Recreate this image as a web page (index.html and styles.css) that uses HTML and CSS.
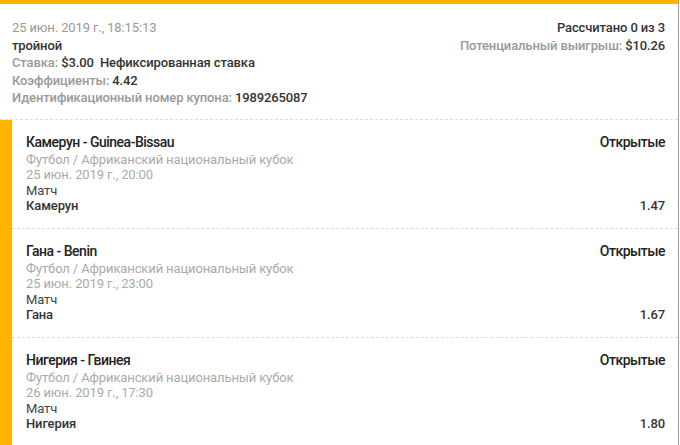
FILE: index.html
```html
<!DOCTYPE html>
<html lang="ru">
<head>
    <meta charset="UTF-8">
    <meta name="viewport" content="width=device-width, initial-scale=1.0">
    <title>Купон</title>
    <link rel="stylesheet" href="styles.css">
</head>
<body>
    <div class="coupon">
        <div class="summary">
            <div class="summary-left">
                <div class="muted">25 июн. 2019 г., 18:15:13</div>
                <div class="strong">тройной</div>
                <div><span class="label">Ставка:</span> <span class="strong">$3.00</span>&nbsp; <span class="strong">Нефиксированная ставка</span></div>
                <div><span class="label">Коэффициенты:</span> <span class="strong">4.42</span></div>
                <div><span class="label">Идентификационный номер купона:</span> <span class="strong">1989265087</span></div>
            </div>
            <div class="summary-right">
                <div class="strong">Рассчитано 0 из 3</div>
                <div><span class="label">Потенциальный выигрыш:</span> <span class="strong">$10.26</span></div>
            </div>
        </div>

        <div class="events">
            <div class="event">
                <div class="event-row">
                    <div class="event-title">Камерун - Guinea-Bissau</div>
                    <div class="event-status">Открытые</div>
                </div>
                <div class="light">Футбол / Африканский национальный кубок</div>
                <div class="light">25 июн. 2019 г., 20:00</div>
                <div class="market">Матч</div>
                <div class="event-row">
                    <div class="strong">Камерун</div>
                    <div class="strong">1.47</div>
                </div>
            </div>

            <div class="event">
                <div class="event-row">
                    <div class="event-title">Гана - Benin</div>
                    <div class="event-status">Открытые</div>
                </div>
                <div class="light">Футбол / Африканский национальный кубок</div>
                <div class="light">25 июн. 2019 г., 23:00</div>
                <div class="market">Матч</div>
                <div class="event-row">
                    <div class="strong">Гана</div>
                    <div class="strong">1.67</div>
                </div>
            </div>

            <div class="event">
                <div class="event-row">
                    <div class="event-title">Нигерия - Гвинея</div>
                    <div class="event-status">Открытые</div>
                </div>
                <div class="light">Футбол / Африканский национальный кубок</div>
                <div class="light">26 июн. 2019 г., 17:30</div>
                <div class="market">Матч</div>
                <div class="event-row">
                    <div class="strong">Нигерия</div>
                    <div class="strong">1.80</div>
                </div>
            </div>
        </div>
    </div>
</body>
</html>
```

FILE: styles.css
```css
body {
    margin: 0;
    font-family: Roboto, "Liberation Sans", sans-serif;
    font-size: 13px;
    letter-spacing: -0.12px;
    color: #333;
    background-color: #fff;
}
.coupon {
    width: 678px;
    border-top: 4px solid #ffb300;
    border-right: 1px solid #999;
}
.summary {
    display: flex;
    justify-content: space-between;
    padding: 15px 13px 12px 12px;
    line-height: 17.5px;
    border-bottom: 1px dashed #ddd;
}
.summary-right {
    text-align: right;
}
.muted {
    color: #999;
}
.label {
    color: #999;
    font-weight: 500;
}
.strong {
    font-weight: 500;
    color: #333;
}
.events {
    border-left: 12px solid #ffb300;
}
.event {
    padding: 13px 13px 14px 14px;
    line-height: 15.5px;
    border-bottom: 1px dashed #ddd;
}
.event-row {
    display: flex;
    justify-content: space-between;
}
.event-title,
.event-status {
    font-size: 14px;
    font-weight: 500;
    line-height: 18px;
    letter-spacing: -0.5px;
    margin-bottom: 1px;
    color: #222;
}
.light {
    color: #aaa;
}
.market {
    color: #444;
}
```
